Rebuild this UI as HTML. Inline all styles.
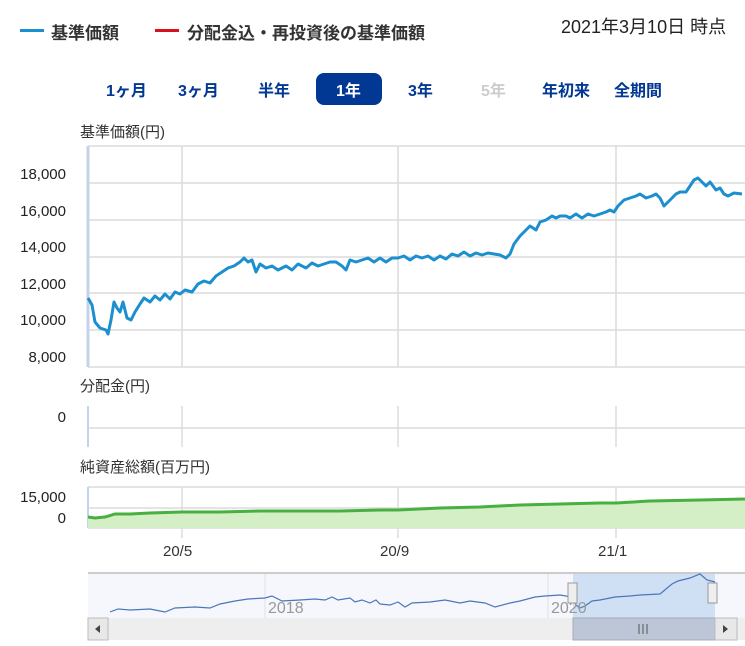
<!DOCTYPE html>
<html><head><meta charset="utf-8"><style>
body{margin:0;width:745px;height:646px;background:#fff;font-family:"Liberation Sans","Noto Sans CJK JP",sans-serif;position:relative;overflow:hidden}
.a{position:absolute;white-space:nowrap}
.leg{font-weight:bold;font-size:17px;color:#333;top:19px}
.btn{top:77px;font-weight:bold;font-size:16px;color:#003894}
.yl{font-size:15px;color:#222;text-align:right;width:66px;left:0}
</style></head><body>
<div class="a" style="left:20px;top:29px;width:24px;height:3px;background:#1b8fcf"></div>
<div class="a leg" style="left:51px">基準価額</div>
<div class="a" style="left:155px;top:29px;width:24px;height:3px;background:#d9101e"></div>
<div class="a leg" style="left:187px">分配金込・再投資後の基準価額</div>
<div class="a" style="left:561px;top:13px;font-size:18px;color:#222">2021年3月10日 時点</div>
<div class="a btn" style="left:106px">1ヶ月</div>
<div class="a btn" style="left:178px">3ヶ月</div>
<div class="a btn" style="left:258px">半年</div>
<div class="a" style="left:316px;top:73px;width:66px;height:32px;background:#003894;border-radius:8px"></div>
<div class="a btn" style="left:336px;color:#fff">1年</div>
<div class="a btn" style="left:408px">3年</div>
<div class="a btn" style="left:481px;color:#ccc">5年</div>
<div class="a btn" style="left:542px">年初来</div>
<div class="a btn" style="left:614px">全期間</div>
<div class="a" style="left:80px;top:121px;font-size:15px;color:#333">基準価額(円)</div>
<div class="a yl" style="top:166px">18,000</div>
<div class="a yl" style="top:203px">16,000</div>
<div class="a yl" style="top:239px">14,000</div>
<div class="a yl" style="top:276px">12,000</div>
<div class="a yl" style="top:312px">10,000</div>
<div class="a yl" style="top:349px">8,000</div>
<div class="a" style="left:80px;top:375px;font-size:15px;color:#333">分配金(円)</div>
<div class="a yl" style="top:409px">0</div>
<div class="a" style="left:80px;top:456px;font-size:15px;color:#333">純資産総額(百万円)</div>
<div class="a yl" style="top:489px">15,000</div>
<div class="a yl" style="top:510px">0</div>
<div class="a" style="left:163px;top:543px;font-size:15px;color:#333">20/5</div>
<div class="a" style="left:380px;top:543px;font-size:15px;color:#333">20/9</div>
<div class="a" style="left:598px;top:543px;font-size:15px;color:#333">21/1</div>
<svg class="a" style="left:0;top:0" width="745" height="646">
<g stroke="#dcdcdc" stroke-width="1.5" fill="none">
<line x1="88" y1="146" x2="745" y2="146"/>
<line x1="88" y1="183" x2="745" y2="183"/><line x1="88" y1="220" x2="745" y2="220"/>
<line x1="88" y1="257" x2="745" y2="257"/><line x1="88" y1="293" x2="745" y2="293"/>
<line x1="88" y1="330" x2="745" y2="330"/><line x1="88" y1="367" x2="745" y2="367"/>
<line x1="182" y1="146" x2="182" y2="367"/><line x1="398" y1="146" x2="398" y2="367"/><line x1="616" y1="146" x2="616" y2="367"/>
<line x1="88" y1="428" x2="745" y2="428"/>
<line x1="182" y1="406" x2="182" y2="447"/><line x1="398" y1="406" x2="398" y2="447"/><line x1="616" y1="406" x2="616" y2="447"/>
<line x1="88" y1="487" x2="745" y2="487"/><line x1="88" y1="508" x2="745" y2="508"/><line x1="88" y1="528" x2="745" y2="528"/>
<line x1="182" y1="487" x2="182" y2="538"/><line x1="398" y1="487" x2="398" y2="538"/><line x1="616" y1="487" x2="616" y2="538"/>
</g>
<line x1="88" y1="146" x2="88" y2="367" stroke="#c5d3e8" stroke-width="3"/>
<line x1="88" y1="406" x2="88" y2="447" stroke="#c5d3e8" stroke-width="2"/>
<line x1="88" y1="487" x2="88" y2="528" stroke="#c5d3e8" stroke-width="2"/>
<polyline fill="none" stroke="#1b8fcf" stroke-width="3" stroke-linejoin="round" points="88,298 92,305 95,322 100,328 106,330 108,334 111,320 114,302 117,308 120,312 123,302 127,318 131,320 135,312 140,304 144,298 150,302 155,296 160,300 165,294 170,299 175,292 180,294 185,290 192,292 198,284 204,281 210,283 216,276 222,272 228,268 234,266 240,262 244,258 248,262 252,260 256,272 260,264 266,268 272,266 278,270 286,266 292,270 298,264 306,268 312,263 318,266 324,264 330,262 336,262 342,266 346,270 350,260 356,262 362,260 368,258 374,262 380,258 386,262 392,258 398,258 404,256 410,260 416,256 422,258 428,256 434,260 440,256 446,259 452,254 458,256 464,252 470,256 476,253 482,255 488,253 494,254 500,255 506,258 510,254 514,244 520,236 526,230 530,226 536,230 540,222 546,220 552,216 556,218 560,216 566,216 570,218 576,214 582,218 588,214 594,216 600,214 606,212 610,210 614,212 618,206 624,200 630,198 636,196 640,194 646,198 652,196 656,194 660,198 664,206 668,202 672,198 676,194 680,192 686,192 690,186 694,180 698,178 702,182 706,186 710,182 716,190 720,188 724,194 728,196 734,193 742,194"/>
<path d="M88,517 L95,518 L105,517 L115,514 L130,514 L150,513 L182,512 L220,512 L260,511 L300,511 L340,511 L380,510 L398,510 L440,508 L480,507 L520,505 L560,504 L600,503 L616,503 L650,501 L700,500 L745,499 L745,528 L88,528Z" fill="#d4efc5"/>
<polyline fill="none" stroke="#48b040" stroke-width="3" points="88,517 95,518 105,517 115,514 130,514 150,513 182,512 220,512 260,511 300,511 340,511 380,510 398,510 440,508 480,507 520,505 560,504 600,503 616,503 650,501 700,500 745,499"/>
<line x1="88" y1="573" x2="745" y2="573" stroke="#bbb" stroke-width="1.5"/>
<rect x="88" y="574" width="657" height="44" fill="#f5f7fc"/>
<line x1="265" y1="574" x2="265" y2="618" stroke="#e0e0e0"/>
<line x1="548" y1="574" x2="548" y2="618" stroke="#e0e0e0"/>
<rect x="573" y="574" width="142" height="44" fill="#cfe0f5"/>
<polyline fill="none" stroke="#4a77b8" stroke-width="1.2" points="110,612 118,609 130,610 150,609 165,612 175,608 195,607 210,608 220,604 235,601 248,599 265,598 272,596 282,601 300,600 315,599 325,600 332,597 338,600 350,598 355,602 362,600 370,603 376,600 380,604 390,605 398,602 405,607 412,603 430,602 445,600 460,603 470,601 485,603 495,607 510,603 520,601 535,597 545,596 560,595 572,597 576,605 580,608 585,606 592,601 600,600 615,597 630,596 640,595 660,594 672,584 678,581 690,578 700,574 707,580 715,582"/>
<text x="268" y="613" font-size="16" fill="#999" font-family="Liberation Sans">2018</text>
<text x="551" y="613" font-size="16" fill="#999" font-family="Liberation Sans">2020</text>
<rect x="568" y="583" width="9" height="20" fill="#eee" stroke="#999"/>
<rect x="708" y="583" width="9" height="20" fill="#eee" stroke="#999"/>
<rect x="88" y="618" width="657" height="22" fill="#eee"/>
<rect x="573" y="618" width="142" height="22" fill="#bcc6d6" stroke="#aab"/>
<rect x="88" y="618" width="20" height="22" fill="#e8e8e8" stroke="#bbb"/>
<rect x="715" y="618" width="22" height="22" fill="#e8e8e8" stroke="#bbb"/>
<path d="M100,625 L95,629 L100,633Z" fill="#444"/><path d="M723,625 L728,629 L723,633Z" fill="#444"/>
<g stroke="#555"><line x1="639" y1="624" x2="639" y2="634"/><line x1="643" y1="624" x2="643" y2="634"/><line x1="647" y1="624" x2="647" y2="634"/></g>
</svg>
</body></html>
